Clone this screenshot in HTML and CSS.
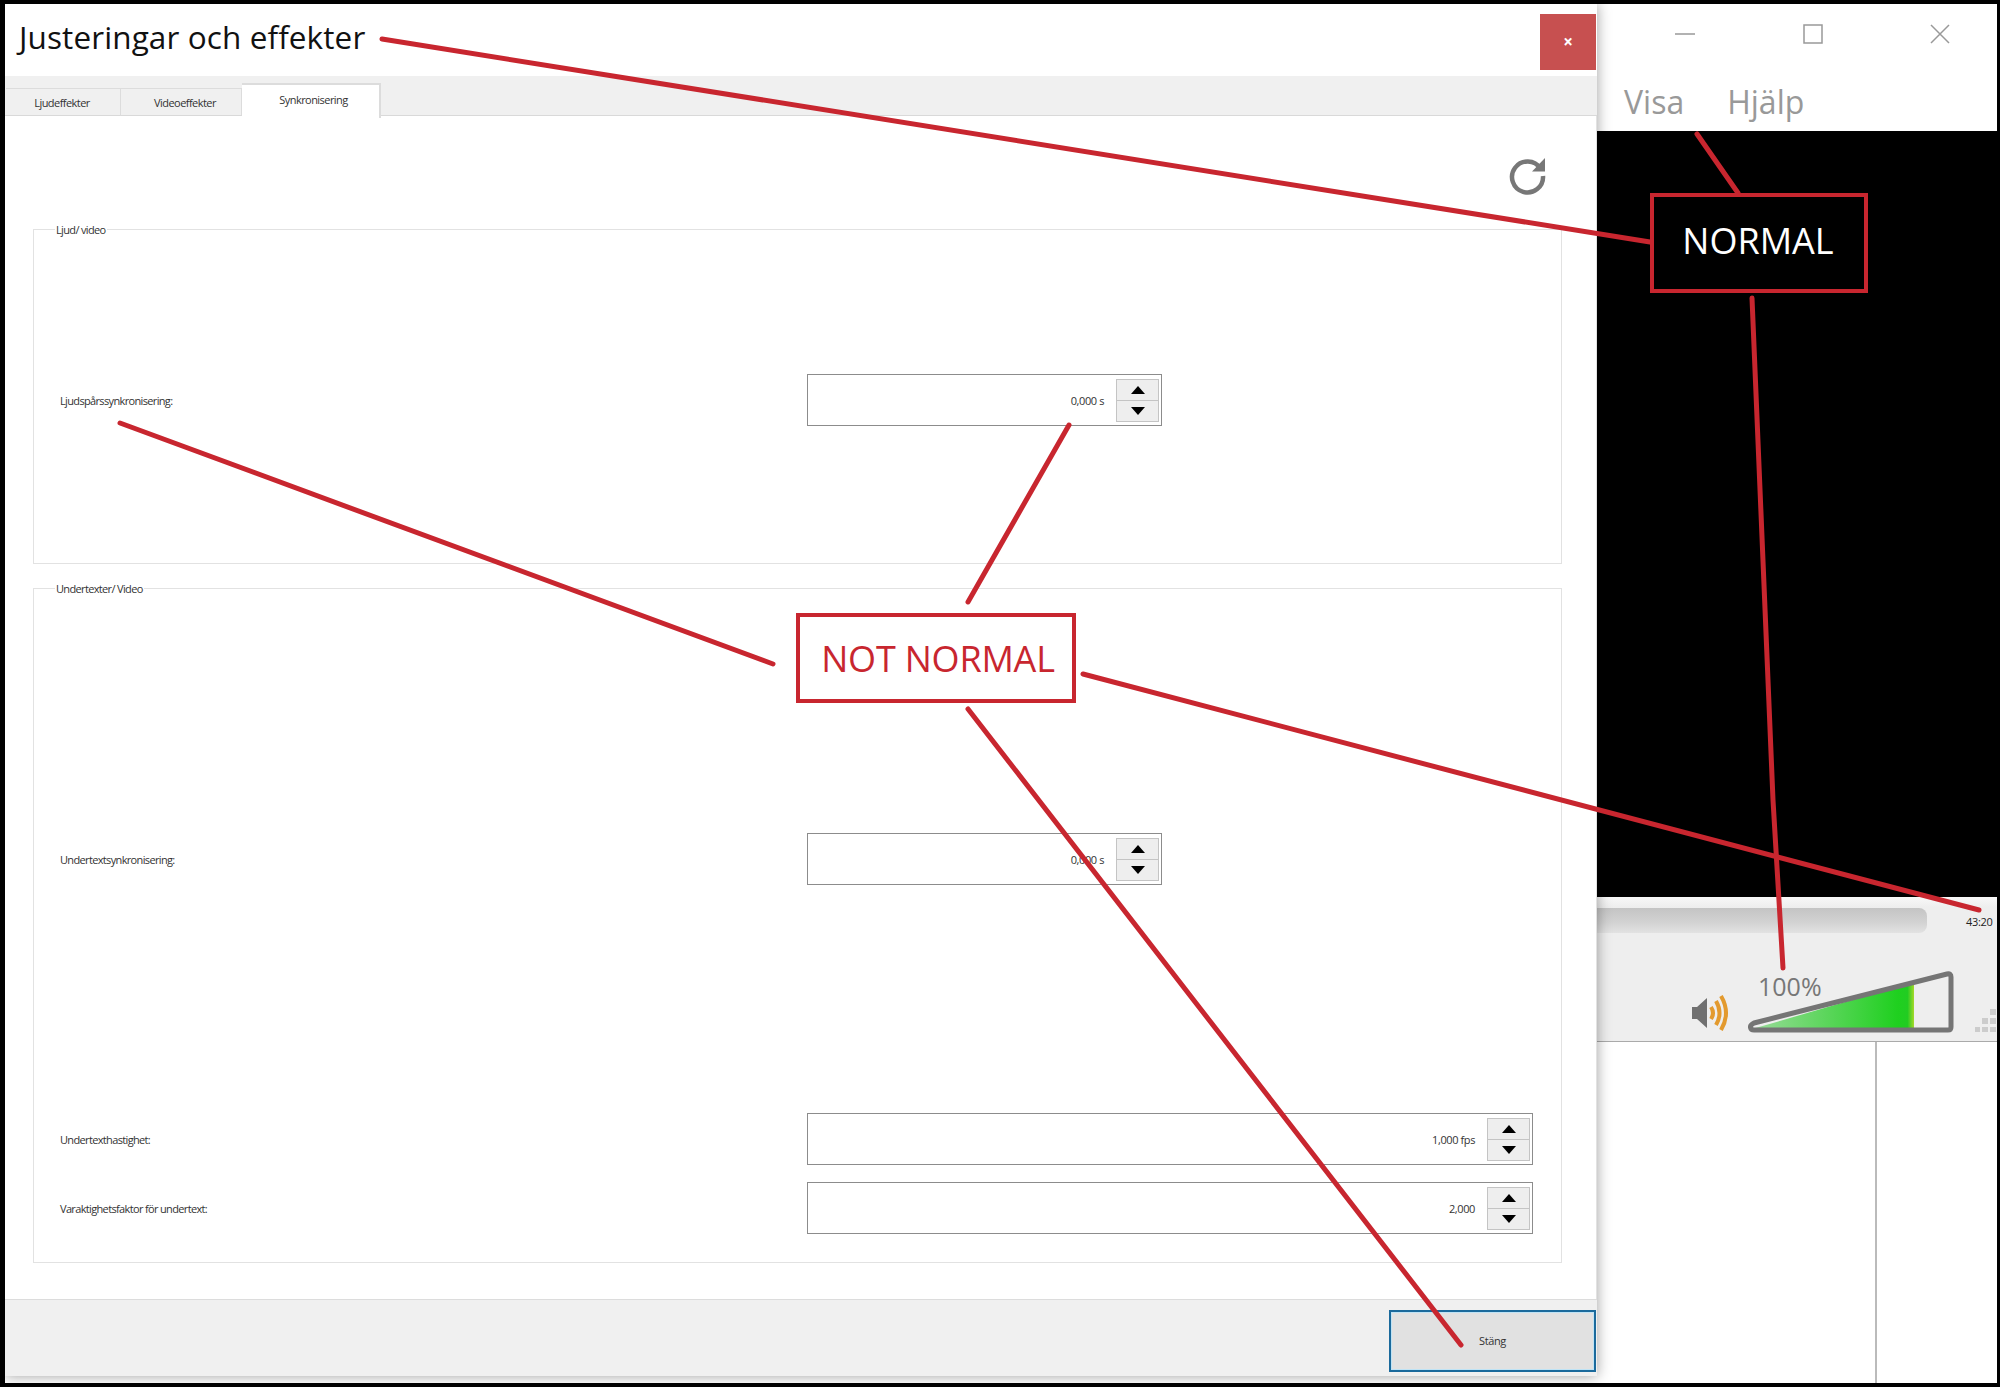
FILE: index.html
```html
<!DOCTYPE html>
<html lang="sv">
<head>
<meta charset="utf-8">
<title>Justeringar och effekter</title>
<link rel="stylesheet" href="styles.css">
</head>
<body>
<div class="frame">
  <div class="desktop">
    <section class="dialog">
      <header class="dialog-title">
        <h1>Justeringar och effekter</h1>
        <button class="dialog-close">×</button>
      </header>
      <nav class="tabs">
        <div class="tab tab-1">Ljudeffekter</div>
        <div class="tab tab-2">Videoeffekter</div>
        <div class="tab tab-active">Synkronisering</div>
      </nav>
      <main class="content">
        <div class="refresh-row">
          <svg class="refresh" width="38" height="38" viewBox="0 0 38 38">
            <path d="M31.5 11.5 A15.5 15.5 0 1 0 34 19" fill="none" stroke="#777" stroke-width="4.5"/>
            <path d="M36 1 V14.5 H23 Z" fill="#777"/>
          </svg>
        </div>
        <div class="group group-audio">
          <div class="legend">Ljud/ video</div>
          <div class="row">
            <label class="row-label">Ljudspårssynkronisering:</label>
            <div class="spin spin-short">
              <span class="spin-value">0,000 s</span>
              <div class="spin-buttons"><i class="btn-up"><b></b></i><i class="btn-down"><b></b></i></div>
            </div>
          </div>
        </div>
        <div class="group group-subs">
          <div class="legend">Undertexter/ Video</div>
          <div class="row row-sub">
            <label class="row-label">Undertextsynkronisering:</label>
            <div class="spin spin-short">
              <span class="spin-value">0,000 s</span>
              <div class="spin-buttons"><i class="btn-up"><b></b></i><i class="btn-down"><b></b></i></div>
            </div>
          </div>
          <div class="row row-speed">
            <label class="row-label">Undertexthastighet:</label>
            <div class="spin spin-wide">
              <span class="spin-value">1,000 fps</span>
              <div class="spin-buttons"><i class="btn-up"><b></b></i><i class="btn-down"><b></b></i></div>
            </div>
          </div>
          <div class="row row-factor">
            <label class="row-label">Varaktighetsfaktor för undertext:</label>
            <div class="spin spin-wide">
              <span class="spin-value">2,000</span>
              <div class="spin-buttons"><i class="btn-up"><b></b></i><i class="btn-down"><b></b></i></div>
            </div>
          </div>
        </div>
      </main>
      <footer class="dialog-footer">
        <button class="close-button">Stäng</button>
      </footer>
    </section>

    <section class="player">
      <div class="player-top">
        <div class="win-controls">
          <svg class="win-icon win-min" width="20" height="20" viewBox="0 0 20 20"><path d="M0 10H20" stroke="#999" stroke-width="1.5"/></svg>
          <svg class="win-icon win-max" width="20" height="20" viewBox="0 0 20 20"><rect x="1" y="1" width="18" height="18" fill="none" stroke="#999" stroke-width="1.5"/></svg>
          <svg class="win-icon win-x" width="20" height="20" viewBox="0 0 20 20"><path d="M1 1L19 19M19 1L1 19" stroke="#999" stroke-width="1.5"/></svg>
        </div>
        <div class="menu"><span>Visa</span><span>Hjälp</span></div>
      </div>
      <div class="video"></div>
      <div class="controls">
        <div class="seek-row">
          <div class="seek"></div>
          <span class="time">43:20</span>
        </div>
        <div class="volume-row">
          <svg class="speaker" width="40" height="36" viewBox="0 0 40 36">
            <path d="M1 12H6L16 3V33L6 24H1Z" fill="#707070"/>
            <path d="M20 12Q24 18 20 24" fill="none" stroke="#e39a2e" stroke-width="4"/>
            <path d="M25 6Q32 18 25 30" fill="none" stroke="#e39a2e" stroke-width="4"/>
            <path d="M30 1Q40 18 30 35" fill="none" stroke="#e39a2e" stroke-width="4"/>
          </svg>
          <div class="volume">
            <span class="volume-text">100%</span>
            <svg width="206" height="62" viewBox="0 0 206 62">
              <defs>
                <linearGradient id="vol" x1="0" x2="1" y1="0" y2="0">
                  <stop offset="0" stop-color="#9adb9a"/>
                  <stop offset="0.9" stop-color="#1fd01f"/>
                  <stop offset="0.96" stop-color="#22cc22"/>
                  <stop offset="1" stop-color="#a5d82a"/>
                </linearGradient>
              </defs>
              <path d="M4 58 L166 11 V58 Z" fill="url(#vol)"/>
              <path d="M6 52 Q2 54 2.5 56.5 Q3 59 6 59 H200 Q203 59 203 56 V6 Q203 2 199 3 Z" fill="none" stroke="#757575" stroke-width="5" stroke-linejoin="round"/>
            </svg>
          </div>
          <svg class="grip" width="22" height="24" viewBox="0 0 22 24">
            <path d="M15 0h6v6h-6zM7 9h6v6H7zM15 9h6v6h-6zM0 18h5v5H0zM7 18h6v5H7zM15 18h6v5h-6z" fill="#ccc"/>
          </svg>
        </div>
      </div>
      <div class="player-list"><div class="list-divider"></div></div>
    </section>
  </div>

  <svg class="callouts" width="2000" height="1387" viewBox="0 0 2000 1387">
    <g stroke="#c8262f" stroke-width="5" stroke-linecap="round" fill="none">
      <path d="M382 39L1650 242"/>
      <path d="M1697 134L1738 193"/>
      <path d="M1752 298L1773 800L1783 968"/>
      <path d="M1083 674L1979 910"/>
      <path d="M120 423L773 664"/>
      <path d="M968 602L1069 425"/>
      <path d="M968 709L1461 1345"/>
    </g>
  </svg>
  <div class="callout callout-normal">NORMAL</div>
  <div class="callout callout-not">NOT NORMAL</div>
</div>
</body>
</html>
```

FILE: styles.css
```css
* { box-sizing: border-box; }

html, body { margin: 0; height: 100%; }

body {
  font-family: "Open Sans", "Liberation Sans", sans-serif;
  background: #000;
  color: #222;
}

.frame {
  position: relative;
  width: 2000px;
  height: 1387px;
  padding: 4px 3px 4px 5px;
  background: #000;
}

.desktop {
  display: flex;
  height: 100%;
  overflow: hidden;
  background: #fff;
}

/* dialog */
.dialog {
  position: relative;
  z-index: 1;
  display: flex;
  flex-direction: column;
  flex: 0 0 1592px;
  height: 1372px;
  background: #fff;
  box-shadow: 0 0 13px rgba(0, 0, 0, .38);
}

.dialog-title {
  display: flex;
  justify-content: space-between;
  height: 72px;
  padding: 10px 1px 0 14px;
}

.dialog-title h1 {
  margin: 1px 0 0;
  font-size: 31.5px;
  line-height: 44px;
  font-weight: 400;
  letter-spacing: .1px;
  color: #111;
}

.dialog-close {
  width: 56px;
  height: 56px;
  border: 0;
  padding: 0;
  background: #c75050;
  color: #fff;
  font: 700 17px/56px "Open Sans", sans-serif;
}

.tabs {
  display: flex;
  align-items: flex-end;
  height: 40px;
  padding-left: 1px;
  background: #f0f0f0;
  border-bottom: 1px solid #d9d9d9;
}

.tab {
  height: 28px;
  margin-bottom: -1px;
  border: 1px solid #dcdcdc;
  border-bottom: 1px solid #d9d9d9;
  border-left: 0;
  font-size: 11px;
  line-height: 27px;
  letter-spacing: -.55px;
  text-align: center;
  color: #333;
}

.tab-1 { width: 115px; padding-right: 2px; }
.tab-2 { width: 121px; padding-left: 8px; }

.tab-active {
  position: relative;
  z-index: 1;
  width: 139px;
  height: 35px;
  margin-bottom: -3px;
  padding-left: 6px;
  border-top-width: 2px;
  border-right-width: 2px;
  border-bottom: 0;
  background: #fff;
  line-height: 30px;
}

.content {
  flex: 1;
  min-height: 0;
  padding: 0 34px 0 28px;
  border-right: 1px solid #e2e2e2;
  background: #fff;
}

.refresh-row {
  display: flex;
  justify-content: flex-end;
  height: 113px;
  padding: 41px 15px 0 0;
}

.group {
  position: relative;
  border: 1.5px solid #e2e2e2;
}

.group-audio {
  display: flex;
  align-items: center;
  height: 335px;
  padding: 7px 28px 0 26px;
}

.group-subs {
  height: 675px;
  margin-top: 24px;
  padding: 244px 28px 0 26px;
}

.legend {
  position: absolute;
  top: -8px;
  left: 21px;
  padding: 0 1px;
  background: #fff;
  font-size: 11px;
  line-height: 15px;
  letter-spacing: -.65px;
  color: #333;
}

.row {
  display: flex;
  align-items: center;
  flex: 1;
}

.row-speed { margin-top: 228px; }
.row-factor { margin-top: 17px; }

.row-label {
  flex: 0 0 747px;
  font-size: 11px;
  letter-spacing: -.65px;
  color: #333;
}

.spin {
  display: flex;
  align-items: center;
  justify-content: flex-end;
  height: 52px;
  padding-right: 2px;
  border: 1.5px solid #8c8c8c;
  background: #fff;
}

.spin-short { width: 355px; }
.spin-wide { flex: 1; }

.spin-value {
  margin-right: 12px;
  font-size: 11px;
  letter-spacing: -.4px;
  color: #333;
}

.spin-buttons {
  display: flex;
  flex-direction: column;
  width: 43px;
  height: 43px;
  border: 1px solid #c4c4c4;
  background: #eee;
}

.btn-up, .btn-down {
  display: flex;
  flex: 1;
  align-items: center;
  justify-content: center;
}

.btn-up { border-bottom: 1px solid #c4c4c4; }

.btn-up b {
  border-left: 7.5px solid transparent;
  border-right: 7.5px solid transparent;
  border-bottom: 8px solid #000;
}

.btn-down b {
  border-left: 7.5px solid transparent;
  border-right: 7.5px solid transparent;
  border-top: 8px solid #000;
}

.dialog-footer {
  display: flex;
  justify-content: flex-end;
  height: 77px;
  padding: 10px 1px 4px 0;
  background: #f0f0f0;
  border-top: 1px solid #dcdcdc;
}

.close-button {
  width: 207px;
  height: 62px;
  padding-bottom: 2px;
  border: 2px solid #1b6a9c;
  outline: 1px solid #bfe3f5;
  outline-offset: -3px;
  background: #e1e1e1;
  font: 11px "Open Sans", sans-serif;
  letter-spacing: -.4px;
  color: #333;
}

/* player window */
.player {
  display: flex;
  flex-direction: column;
  flex: 1;
  min-width: 0;
}

.player-top {
  height: 127px;
  background: #fff;
}

.win-controls {
  display: flex;
  height: 78px;
  padding: 20px 47px 0 78px;
  justify-content: space-between;
}

.menu {
  display: flex;
  gap: 43px;
  padding-left: 27px;
  font-size: 32px;
  line-height: 40px;
  color: #999;
}

.video {
  height: 766px;
  background: #000;
}

.controls {
  position: relative;
  height: 145px;
  background: linear-gradient(#f8f8f8, #eee 10px);
  border-bottom: 1.5px solid #aaa;
}

.seek-row {
  display: flex;
  align-items: flex-start;
  height: 74px;
  padding-top: 11px;
}

.seek {
  width: 330px;
  height: 25px;
  border-radius: 0 8px 8px 0;
  background: linear-gradient(#c4c4c4, #d3d3d3 60%, #e2e2e2);
}

.time {
  margin-left: 39px;
  margin-top: 6px;
  font-size: 11px;
  line-height: 15px;
  letter-spacing: -.3px;
  color: #222;
}

.volume-row {
  display: flex;
  align-items: flex-end;
  padding-left: 94px;
}

.speaker { margin: 0 17px 8px 0; }

.volume {
  position: relative;
  display: flex;
  margin-bottom: 6px;
}

.volume-text {
  position: absolute;
  left: 10px;
  top: -1px;
  font-size: 25px;
  line-height: 32px;
  color: #777;
}

.grip {
  position: absolute;
  right: 0;
  bottom: 8px;
}

.player-list {
  flex: 1;
  position: relative;
  display: flex;
  justify-content: flex-end;
  padding-right: 120px;
  background: #fff;
}

.list-divider {
  width: 2px;
  background: #bbb;
}

/* annotations */
.callouts {
  position: absolute;
  inset: 0;
  z-index: 2;
  pointer-events: none;
}

.callout {
  position: absolute;
  z-index: 3;
  display: flex;
  align-items: center;
  justify-content: center;
  border: 4.5px solid #c8262f;
  font-size: 36px;
  line-height: 1;
}

.callout-normal {
  left: 1650px;
  top: 193px;
  width: 218px;
  height: 100px;
  padding: 0 2px 4px 0;
  background: #000;
  color: #fff;
}

.callout-not {
  left: 796px;
  top: 613px;
  width: 280px;
  height: 90px;
  padding: 2px 0 0 4px;
  background: #fff;
  color: #c8262f;
  letter-spacing: -.2px;
}
```
